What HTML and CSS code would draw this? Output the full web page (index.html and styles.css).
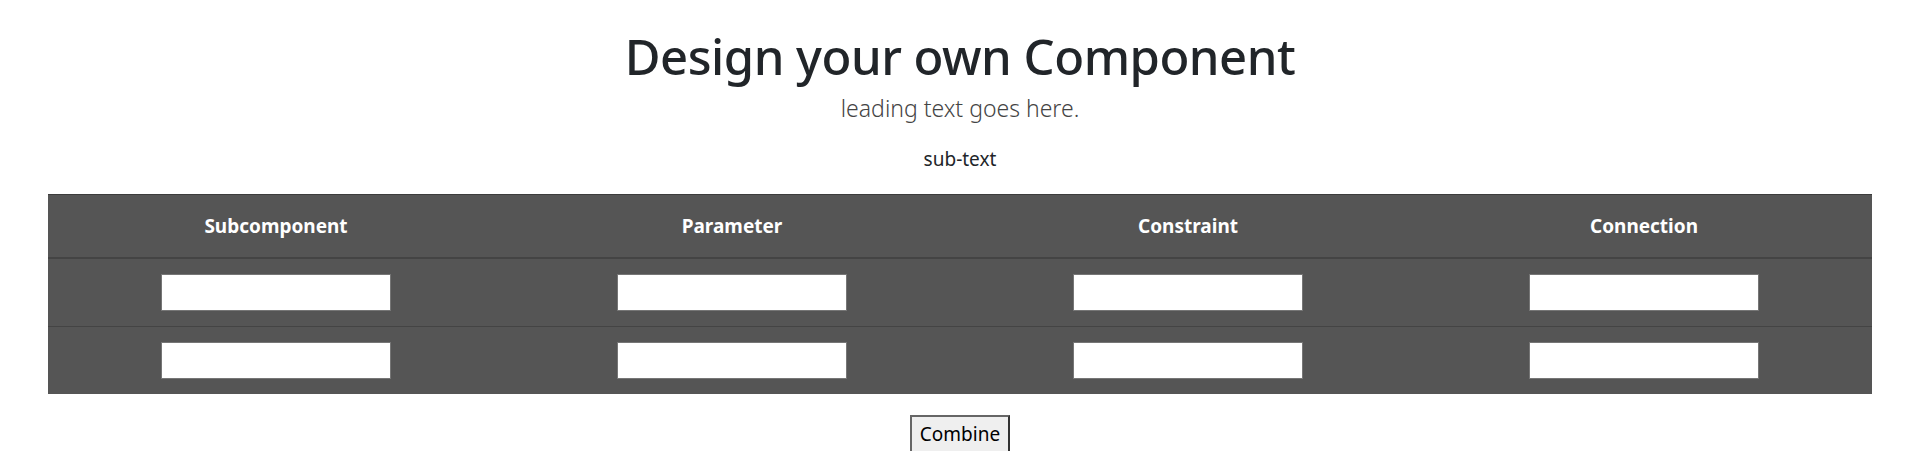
FILE: index.html
```html
<!DOCTYPE html>
<html lang="en">
<head>
  <meta charset="UTF-8" />
  <meta name="viewport" content="width=device-width, initial-scale=1.0"/>
  <title>Design your own Component</title>
  <link rel="stylesheet" href="styles.css">
</head>
<body>

  <div class="container">
    <h1>Design your own Component</h1>
    <p class="lead">leading text goes here.</p>
    <p class="sub">sub-text</p>

    <table class="design-table">
      <thead>
        <tr>
          <th>Subcomponent</th>
          <th>Parameter</th>
          <th>Constraint</th>
          <th>Connection</th>
        </tr>
      </thead>
      <tbody>
        <tr>
          <td><input type="text" /></td>
          <td><input type="text" /></td>
          <td><input type="text" /></td>
          <td><input type="text" /></td>
        </tr>
        <tr>
          <td><input type="text" /></td>
          <td><input type="text" /></td>
          <td><input type="text" /></td>
          <td><input type="text" /></td>
        </tr>
      </tbody>
    </table>

    <div class="actions">
      <button type="button">Combine</button>
    </div>
  </div>

</body>
</html>
```

FILE: styles.css
```css
* {
  margin: 0; padding: 0; box-sizing: border-box;
}
body {
  font-family: 'Noto Sans', 'Open Sans', sans-serif;
  color: #212529;
  background: #fff;
  font-size: 20px;
}
.container {
  padding: 0 48px;
  text-align: center;
}
h1 {
  font-size: 49px;
  font-weight: 500;
  letter-spacing: -0.5px;
  line-height: 60px;
  padding-top: 26px;
  color: #212529;
}
.lead {
  font-size: 23px;
  font-weight: 300;
  line-height: 30px;
  margin-top: 7px;
  color: #444;
}
.sub {
  font-size: 19px;
  line-height: 26px;
  margin-top: 23px;
  color: #212529;
}
.design-table {
  width: 100%;
  margin-top: 22px;
  border-collapse: collapse;
  table-layout: fixed;
  background: #555;
  color: #fff;
}
.design-table th {
  height: 63px;
  font-size: 19px;
  font-weight: 700;
  border-top: 1px solid #3c3c3c;
  border-bottom: 2px solid #444;
  vertical-align: middle;
}
.design-table td {
  padding: 15px 0 15px;
  border-top: 1px solid #444;
  vertical-align: middle;
}
.design-table tbody tr:first-child td {
  border-top: none;
}
.design-table input {
  width: 230px;
  height: 37px;
  border: 1px solid #767676;
  background: #fff;
  outline: none;
}
.actions {
  margin-top: 21px;
}
button {
  font-family: 'Noto Sans', 'Open Sans', sans-serif;
  font-size: 19px;
  line-height: 27px;
  padding: 4px 8px;
  color: #000;
  background: #efefef;
  border: 2px solid #666;
  border-right-color: #333;
  border-bottom-color: #333;
}
```
